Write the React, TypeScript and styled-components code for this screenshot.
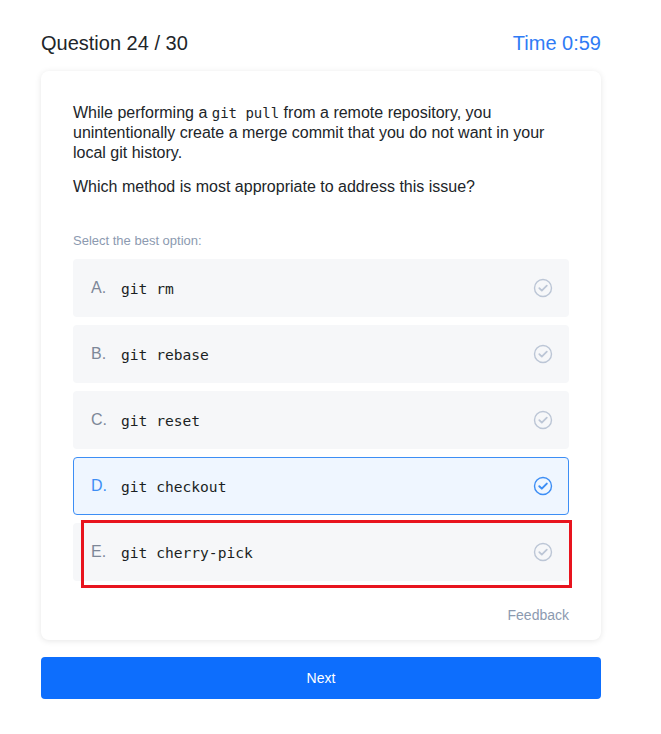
import React from "react";
import styled, { createGlobalStyle } from "styled-components";

const Global = createGlobalStyle`
  html, body { margin: 0; padding: 0; background: #ffffff; }
  body { font-family: "Liberation Sans", Arial, sans-serif; color: #212529; }
`;

const Page = styled.div`
  width: 560px;
  padding: 28px 0 36px 41px;
`;

const Header = styled.div`
  display: flex;
  justify-content: space-between;
  align-items: center;
  height: 30px;
  margin-bottom: 13px;
`;

const Title = styled.div`
  font-size: 20px;
  color: #212529;
`;

const Timer = styled.div`
  font-size: 20px;
  color: #2f7bf5;
`;

const Card = styled.div`
  background: #fff;
  border-radius: 8px;
  box-shadow: 0 1px 6px rgba(0, 0, 0, 0.1);
  padding: 32px 32px 17px;
`;

const Para = styled.p<{ $gap: number }>`
  margin: 0 0 ${(p) => p.$gap}px;
  font-size: 16px;
  line-height: 20px;
  color: #212529;
`;

const InlineCode = styled.code`
  font-family: "DejaVu Sans Mono", "Liberation Mono", monospace;
  font-size: 14px;
`;

const Hint = styled.div`
  font-size: 13px;
  line-height: 16px;
  color: #8c9ab0;
  margin-bottom: 10px;
`;

const Options = styled.div`
  display: flex;
  flex-direction: column;
  gap: 8px;
`;

const Option = styled.div<{ $selected?: boolean }>`
  position: relative;
  box-sizing: border-box;
  height: 58px;
  display: flex;
  align-items: center;
  padding: 0 15px 0 17px;
  border-radius: 4px;
  background: ${(p) => (p.$selected ? "#eff6ff" : "#f6f7f9")};
  border: 1px solid ${(p) => (p.$selected ? "#3d8ef5" : "transparent")};
`;

const Letter = styled.span<{ $selected?: boolean }>`
  width: 30px;
  font-size: 16px;
  color: ${(p) => (p.$selected ? "#3d8ef5" : "#7d8798")};
`;

const Code = styled.span`
  flex: 1;
  font-family: "DejaVu Sans Mono", "Liberation Mono", monospace;
  font-size: 14.6px;
  color: #1b1f24;
`;

const Highlight = styled.div`
  position: absolute;
  left: 7px;
  top: -4px;
  right: -4px;
  bottom: -8px;
  border: 3px solid #e8141e;
  pointer-events: none;
`;

const Footer = styled.div`
  display: flex;
  justify-content: flex-end;
  margin-top: 26px;
`;

const Feedback = styled.span`
  font-size: 14px;
  line-height: 16px;
  color: #8c9ab0;
`;

const NextButton = styled.button`
  display: block;
  width: 100%;
  height: 42px;
  margin-top: 17px;
  border: none;
  border-radius: 4px;
  background: #0d6efd;
  color: #fff;
  font-family: "Liberation Sans", Arial, sans-serif;
  font-size: 14px;
  cursor: pointer;
`;

const Check = ({ selected }: { selected?: boolean }) => {
  const c = selected ? "#3d8ef5" : "#bcc6d6";
  return (
    <svg width="20" height="20" viewBox="0 0 20 20" fill="none">
      <circle cx="10" cy="10" r="8.5" stroke={c} strokeWidth="1.4" />
      <path d="M6.3 10.2 L8.8 12.6 L13.8 7.6" stroke={c} strokeWidth={selected ? 2 : 1.8} strokeLinecap="round" strokeLinejoin="round" />
    </svg>
  );
};

const options = [
  { l: "A.", t: "git rm" },
  { l: "B.", t: "git rebase" },
  { l: "C.", t: "git reset" },
  { l: "D.", t: "git checkout", sel: true },
  { l: "E.", t: "git cherry-pick", mark: true },
];

export default function App() {
  return (
    <>
      <Global />
      <Page>
        <Header>
          <Title>Question 24 / 30</Title>
          <Timer>Time 0:59</Timer>
        </Header>
        <Card>
          <Para $gap={14}>
            While performing a <InlineCode>git pull</InlineCode> from a remote repository, you
            unintentionally create a merge commit that you do not want in your local git history.
          </Para>
          <Para $gap={36}>Which method is most appropriate to address this issue?</Para>
          <Hint>Select the best option:</Hint>
          <Options>
            {options.map((o) => (
              <Option key={o.l} $selected={o.sel}>
                <Letter $selected={o.sel}>{o.l}</Letter>
                <Code>{o.t}</Code>
                <Check selected={o.sel} />
                {o.mark && <Highlight />}
              </Option>
            ))}
          </Options>
          <Footer>
            <Feedback>Feedback</Feedback>
          </Footer>
        </Card>
        <NextButton>Next</NextButton>
      </Page>
    </>
  );
}
